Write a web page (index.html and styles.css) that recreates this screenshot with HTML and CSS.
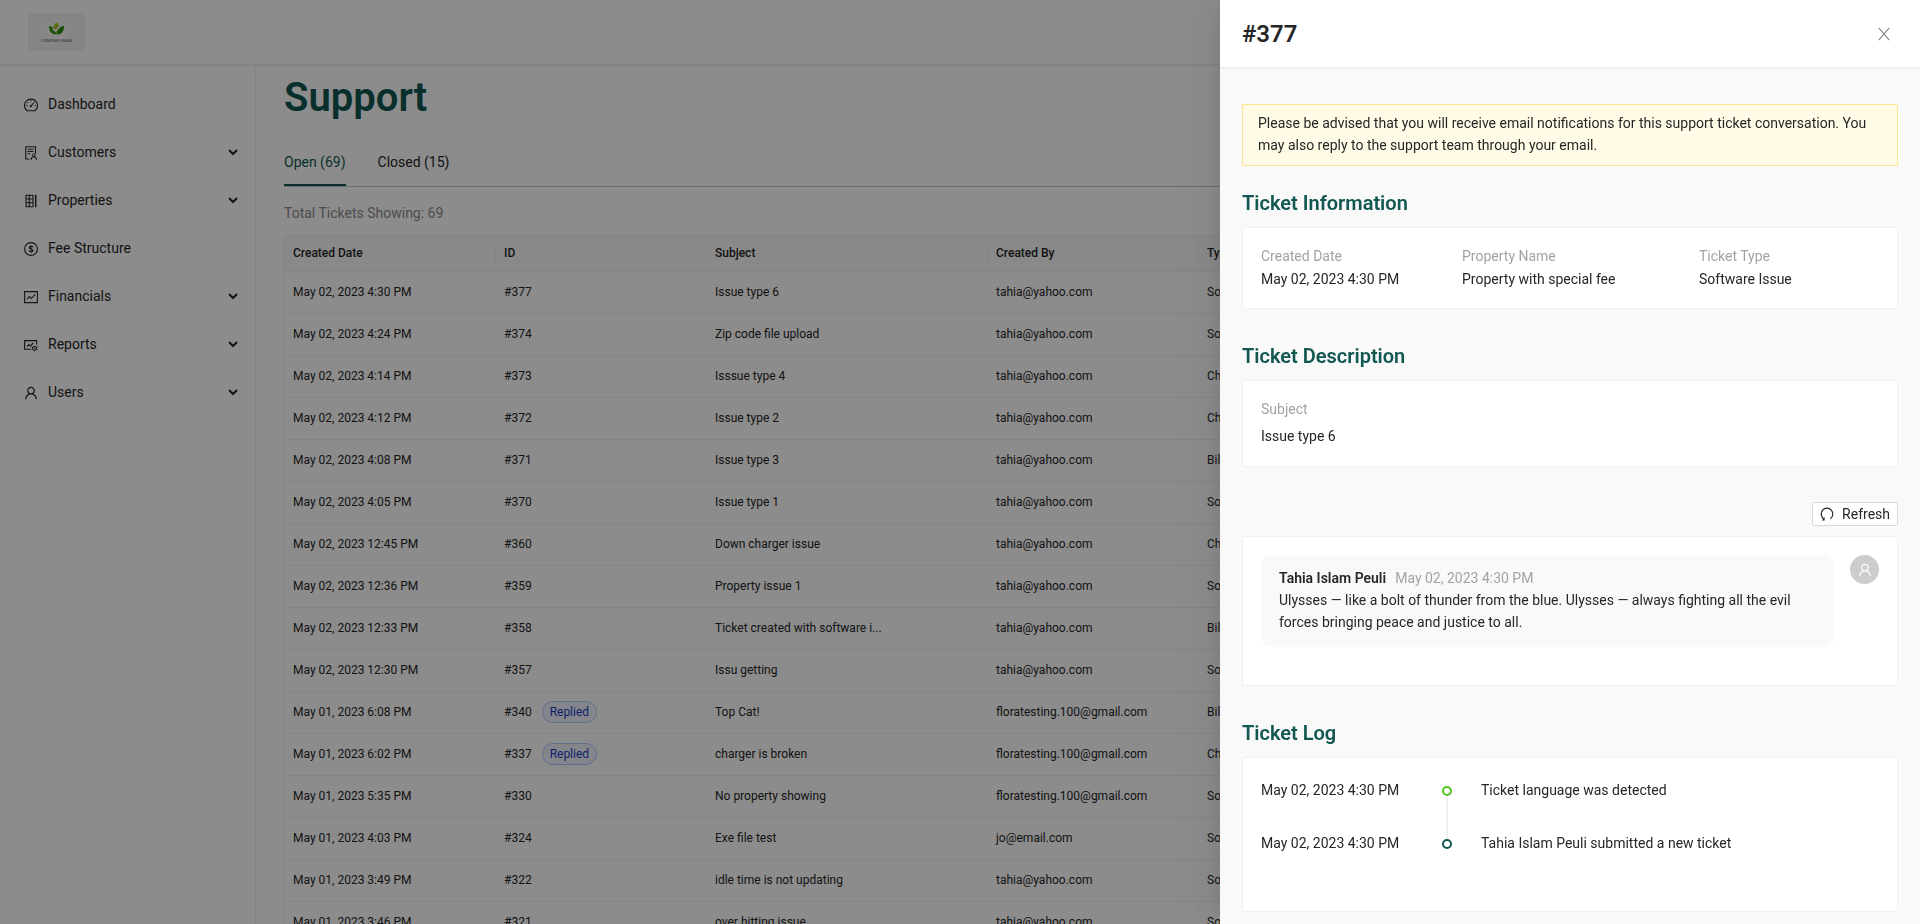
FILE: index.html
```html
<!DOCTYPE html>
<html lang="en">
<head>
<meta charset="utf-8">
<meta name="viewport" content="width=device-width, initial-scale=1">
<title>Support</title>
<link rel="stylesheet" href="styles.css">
</head>
<body>
<svg class="defs" aria-hidden="true">
  <symbol id="i-user" viewBox="64 64 896 896"><path fill="currentColor" d="M858.5 763.6a374 374 0 00-80.6-119.5 375.63 375.63 0 00-119.5-80.6c-.4-.2-.8-.3-1.2-.5C719.5 518 760 444.7 760 362c0-137-111-248-248-248S264 225 264 362c0 82.7 40.5 156 102.8 201.1-.4.2-.8.3-1.2.5-44.8 18.9-85 46-119.5 80.6a375.63 375.63 0 00-80.6 119.5A371.7 371.7 0 00136 901.8a8 8 0 008 8.2h60c4.4 0 7.9-3.5 8-7.8 2-77.2 33-149.5 87.8-204.3 56.7-56.7 132-87.9 212.2-87.9s155.5 31.2 212.2 87.9C779 752.7 810 825 812 902.2c.1 4.4 3.6 7.8 8 7.8h60a8 8 0 008-8.2c-1-47.8-10.9-94.3-29.5-138.2zM512 534c-45.9 0-89.1-17.9-121.6-50.4S340 407.9 340 362c0-45.9 17.9-89.1 50.4-121.6S466.1 190 512 190s89.1 17.9 121.6 50.4S684 316.1 684 362c0 45.9-17.9 89.1-50.4 121.6S557.9 534 512 534z"/></symbol>
  <symbol id="i-chevron" viewBox="0 0 10 10"><path fill="none" stroke="currentColor" stroke-width="2" d="M1 3l4 4 4-4"/></symbol>
</svg>

<div class="app">
  <header class="topbar">
    <a class="logo" href="#" aria-label="Company Name">
      <svg viewBox="0 0 57 38" width="57" height="38">
        <defs><radialGradient id="lg"><stop offset="0" stop-color="#fafafa"/><stop offset="1" stop-color="#f0f0f0"/></radialGradient></defs>
        <rect width="57" height="38" fill="url(#lg)"/>
        <path fill="#a9c31a" d="M28.500 9.500c2.500 1.500 3.500 4 3 7l-3 4-3-4c-.5-3 .5-5.500 3-7z"/>
        <path fill="#3f9a10" d="M21 13c3 0 6 2 7.500 8.500C23 21.500 21 18 21 13z"/>
        <path fill="#2b8a0a" d="M36 13c-3 0-6 2-7.500 8.500C34 21.500 36 18 36 13z"/>
        <path fill="none" stroke="#f4f4f4" stroke-width="1.800" d="M25 15.500l2.500 2.500 4.500-5"/>
        <text class="logo-text" x="29" y="29" text-anchor="middle">COMPANY NAME</text>
      </svg>
    </a>
  </header>

  <div class="shell">
    <nav class="sidebar" aria-label="Main">
      <a class="nav-item" href="#"><svg class="icon" viewBox="0 0 14 14"><path fill="none" stroke="currentColor" stroke-width="1.100" d="M3 12.700a6.500 6.500 0 1 1 8 0zM6.500 8.500L9.500 5.200M7 2.500v1M2.300 7.500h1.200M10.500 7.500h1.200M3.600 4.100l.8.8M9.800 4.600l.6-.6"/><circle cx="6.700" cy="8.200" r="1" fill="currentColor"/></svg><span>Dashboard</span></a>
      <a class="nav-item" href="#"><svg class="icon" viewBox="0 0 14 14"><path fill="none" stroke="currentColor" stroke-width="1.100" d="M5.500 13H1.700V.8h9.800v6.700M3.500 3.300h6M3.500 5.500h6M3.500 7.700h3"/><circle cx="9.800" cy="9.300" r="1.400" fill="none" stroke="currentColor"/><path fill="none" stroke="currentColor" stroke-width="1.100" d="M7.200 13.800c0-4 5.200-4 5.200 0"/></svg><span>Customers</span><svg class="chev"><use href="#i-chevron"/></svg></a>
      <a class="nav-item" href="#"><svg class="icon" viewBox="0 0 14 14"><path fill="none" stroke="currentColor" stroke-width="1.100" d="M2 1v12M5.300 1v12M9 1v12M1.500 1.300h8M1.500 5h8M1.500 8.800h8M1.500 12.700h8"/><path stroke="currentColor" stroke-width="1.500" d="M11.700.7v12.600"/></svg><span>Properties</span><svg class="chev"><use href="#i-chevron"/></svg></a>
      <a class="nav-item" href="#"><svg class="icon" viewBox="0 0 14 14"><circle cx="7" cy="7" r="6.400" fill="none" stroke="currentColor" stroke-width="1.100"/><path fill="none" stroke="currentColor" stroke-width="1.100" d="M9 5.300C8.700 3.900 5.200 3.900 5.200 5.600c0 1.800 3.800 1 3.800 2.900 0 1.800-3.700 1.700-4 0M7 3.300v7.400"/></svg><span>Fee Structure</span></a>
      <a class="nav-item" href="#"><svg class="icon" viewBox="0 0 14 14"><path fill="none" stroke="currentColor" stroke-width="1.100" d="M.6 1.600h12.800v11H.6zM2.800 9.500l2.500-3 2 2L11.200 4.300"/></svg><span>Financials</span><svg class="chev"><use href="#i-chevron"/></svg></a>
      <a class="nav-item" href="#"><svg class="icon" viewBox="0 0 14 14"><path fill="none" stroke="currentColor" stroke-width="1.100" d="M6.800 11.300H.6V2.600h12v4M3 8.500l1.800-1.800 1.500 1.300 3-3.200"/><circle cx="10.600" cy="10.300" r="2" fill="none" stroke="currentColor"/><circle cx="10.600" cy="10.300" r=".8" fill="currentColor"/><path stroke="currentColor" d="M7.600 8.700l1.300.7M12.300 11.200l1.300.7M13.600 8.700l-1.300.7M8.900 11.200l-1.300.7M10.600 12.300v1"/></svg><span>Reports</span><svg class="chev"><use href="#i-chevron"/></svg></a>
      <a class="nav-item" href="#"><svg class="icon"><use href="#i-user"/></svg><span>Users</span><svg class="chev"><use href="#i-chevron"/></svg></a>
    </nav>

    <main class="main">
      <h1 class="page-title">Support</h1>
      <div class="tabs" role="tablist">
        <button class="tab tab-active" role="tab" aria-selected="true">Open (69)</button>
        <button class="tab" role="tab" aria-selected="false">Closed (15)</button>
      </div>
      <p class="total">Total Tickets Showing: 69</p>
      <table class="tickets">
        <colgroup><col class="c-date"><col class="c-id"><col class="c-subject"><col class="c-by"><col></colgroup>
        <thead><tr><th>Created Date</th><th>ID</th><th>Subject</th><th>Created By</th><th>Type</th></tr></thead>
        <tbody>
          <tr><td>May 02, 2023 4:30 PM</td><td>#377</td><td>Issue type 6</td><td>tahia@yahoo.com</td><td>Software Issue</td></tr>
          <tr><td>May 02, 2023 4:24 PM</td><td>#374</td><td>Zip code file upload</td><td>tahia@yahoo.com</td><td>Software Issue</td></tr>
          <tr><td>May 02, 2023 4:14 PM</td><td>#373</td><td>Isssue type 4</td><td>tahia@yahoo.com</td><td>Charger Issue</td></tr>
          <tr><td>May 02, 2023 4:12 PM</td><td>#372</td><td>Issue type 2</td><td>tahia@yahoo.com</td><td>Charger Issue</td></tr>
          <tr><td>May 02, 2023 4:08 PM</td><td>#371</td><td>Issue type 3</td><td>tahia@yahoo.com</td><td>Billing Issue</td></tr>
          <tr><td>May 02, 2023 4:05 PM</td><td>#370</td><td>Issue type 1</td><td>tahia@yahoo.com</td><td>Software Issue</td></tr>
          <tr><td>May 02, 2023 12:45 PM</td><td>#360</td><td>Down charger issue</td><td>tahia@yahoo.com</td><td>Charger Issue</td></tr>
          <tr><td>May 02, 2023 12:36 PM</td><td>#359</td><td>Property issue 1</td><td>tahia@yahoo.com</td><td>Software Issue</td></tr>
          <tr><td>May 02, 2023 12:33 PM</td><td>#358</td><td>Ticket created with software i...</td><td>tahia@yahoo.com</td><td>Billing Issue</td></tr>
          <tr><td>May 02, 2023 12:30 PM</td><td>#357</td><td>Issu getting</td><td>tahia@yahoo.com</td><td>Software Issue</td></tr>
          <tr><td>May 01, 2023 6:08 PM</td><td>#340<span class="tag">Replied</span></td><td>Top Cat!</td><td>floratesting.100@gmail.com</td><td>Billing Issue</td></tr>
          <tr><td>May 01, 2023 6:02 PM</td><td>#337<span class="tag">Replied</span></td><td>charger is broken</td><td>floratesting.100@gmail.com</td><td>Charger Issue</td></tr>
          <tr><td>May 01, 2023 5:35 PM</td><td>#330</td><td>No property showing</td><td>floratesting.100@gmail.com</td><td>Software Issue</td></tr>
          <tr><td>May 01, 2023 4:03 PM</td><td>#324</td><td>Exe file test</td><td>jo@email.com</td><td>Software Issue</td></tr>
          <tr><td>May 01, 2023 3:49 PM</td><td>#322</td><td>idle time is not updating</td><td>tahia@yahoo.com</td><td>Software Issue</td></tr>
          <tr><td>May 01, 2023 3:46 PM</td><td>#321</td><td>over hitting issue</td><td>tahia@yahoo.com</td><td>Software Issue</td></tr>
        </tbody>
      </table>
    </main>
  </div>
</div>

<div class="mask"></div>

<aside class="drawer" role="dialog" aria-labelledby="drawer-title">
  <header class="drawer-head">
    <h2 class="drawer-title" id="drawer-title">#377</h2>
    <button class="close" aria-label="Close"><svg viewBox="0 0 14 14" width="14" height="14"><path fill="none" stroke="currentColor" stroke-width="1.200" d="M1.800.8l10.400 12.400M12.200.8L1.800 13.200"/></svg></button>
  </header>
  <div class="drawer-body">
    <div class="alert" role="alert">Please be advised that you will receive email notifications for this support ticket conversation. You may also reply to the support team through your email.</div>

    <section class="section">
      <h3 class="section-title">Ticket Information</h3>
      <dl class="card info">
        <div><dt>Created Date</dt><dd>May 02, 2023 4:30 PM</dd></div>
        <div><dt>Property Name</dt><dd>Property with special fee</dd></div>
        <div><dt>Ticket Type</dt><dd>Software Issue</dd></div>
      </dl>
    </section>

    <section class="section">
      <h3 class="section-title">Ticket Description</h3>
      <dl class="card subject"><dt>Subject</dt><dd>Issue type 6</dd></dl>
    </section>

    <div class="actions">
      <button class="refresh"><svg viewBox="0 0 14 14" width="14" height="14"><path fill="none" stroke="currentColor" stroke-width="1.200" d="M4 11.900A5.800 5.800 0 1 1 10.200 11.800"/><path fill="currentColor" d="M4.600 9.900v3.600H1.900z"/></svg>Refresh</button>
    </div>
    <div class="card chat">
      <div class="bubble">
        <p><strong class="author">Tahia Islam Peuli</strong><time class="when">May 02, 2023 4:30 PM</time></p>
        <p>Ulysses — like a bolt of thunder from the blue. Ulysses — always fighting all the evil forces bringing peace and justice to all.</p>
      </div>
      <span class="avatar"><svg width="14" height="14"><use href="#i-user"/></svg></span>
    </div>

    <section class="section">
      <h3 class="section-title">Ticket Log</h3>
      <ol class="card log">
        <li class="log-item"><time>May 02, 2023 4:30 PM</time><span class="rail"><i class="dot dot-green"></i><i class="line"></i></span><span>Ticket language was detected</span></li>
        <li class="log-item"><time>May 02, 2023 4:30 PM</time><span class="rail"><i class="dot"></i></span><span>Tahia Islam Peuli submitted a new ticket</span></li>
      </ol>
    </section>
  </div>
</aside>
</body>
</html>
```

FILE: styles.css
```css
:root {
  --brand: #115752;
  --text: #262626;
  --muted: #a3a3a3;
  --line: #f0f0f0;
}

* { box-sizing: border-box; }

body {
  margin: 0;
  font: 400 14px/22px Roboto, "Liberation Sans", sans-serif;
  color: var(--text);
  background: #fff;
}

h1, h2, h3, p, dl, dd, ol { margin: 0; padding: 0; }
ol { list-style: none; }
button { font: inherit; color: inherit; cursor: pointer; }
a { color: inherit; text-decoration: none; }
.defs { display: none; }

/* Page shell */
.app {
  display: flex;
  flex-direction: column;
  height: 100vh;
  overflow: hidden;
}

.topbar {
  flex: none;
  height: 66px;
  padding: 13px 28px;
  border-bottom: 2px solid var(--line);
}

.logo { display: block; width: 57px; height: 38px; }
.logo-text { font: 500 4px Roboto, sans-serif; fill: #777; }

.shell { display: flex; flex: 1; min-height: 0; }

.sidebar {
  flex: none;
  width: 256px;
  padding-top: 14px;
  border-right: 1px solid var(--line);
}

.nav-item {
  display: flex;
  align-items: center;
  gap: 10px;
  height: 48px;
  padding: 0 17px 0 24px;
}

.icon { width: 14px; height: 14px; flex: none; margin-top: 2px; }
.chev { width: 10px; height: 10px; margin-left: auto; }

.main { flex: 1; min-width: 0; padding: 8px 28px 0; overflow: hidden; }

.page-title {
  margin-bottom: 17px;
  font-size: 40px;
  line-height: 48px;
  font-weight: 600;
  color: var(--brand);
}

.tabs { display: flex; gap: 32px; border-bottom: 1px solid #c6c6c6; }

.tab {
  padding: 12px 0 11px;
  border: 0;
  border-bottom: 2px solid transparent;
  background: none;
}

.tab-active { color: var(--brand); border-color: var(--brand); }
.total { margin: 15px 0 11px; color: #8c8c8c; }

/* Ticket table */
.tickets {
  width: 100%;
  table-layout: fixed;
  border-collapse: separate;
  border-spacing: 0;
  border: 1px solid var(--line);
  font-size: 12px;
  line-height: 20px;
}

.c-date, .c-id, .c-by { width: 211px; }
.c-subject { width: 281px; }

.tickets th, .tickets td {
  height: 42px;
  padding: 0 8px 2px;
  border-bottom: 1px solid var(--line);
  text-align: left;
  white-space: nowrap;
}

.tickets th {
  height: 36px;
  font-weight: 500;
  background: linear-gradient(var(--line), var(--line)) right center / 1px 20px no-repeat #fafafa;
}

.tag {
  display: inline-block;
  margin-left: 10px;
  padding: 0 7px;
  border: 1px solid #adc6ff;
  border-radius: 11px;
  background: #f0f5ff;
  color: #1d39c4;
}

/* Overlay and drawer */
.mask { position: fixed; inset: 0; background: rgba(0, 0, 0, 0.45); }

.drawer {
  position: fixed;
  top: 0;
  right: 0;
  bottom: 0;
  display: flex;
  flex-direction: column;
  width: 700px;
  max-width: 100%;
  background: #f9f9f9;
  box-shadow: -6px 0 16px -8px rgba(0, 0, 0, 0.08), -9px 0 28px rgba(0, 0, 0, 0.05), -12px 0 48px 16px rgba(0, 0, 0, 0.03);
}

.drawer-head {
  display: flex;
  align-items: center;
  justify-content: space-between;
  height: 69px;
  flex: none;
  padding: 0 22px;
  border-bottom: 2px solid var(--line);
  background: #fff;
}

.drawer-title { font-size: 24px; line-height: 32px; font-weight: 600; }

.close {
  display: flex;
  padding: 7px;
  border: 0;
  background: none;
  color: #8c8c8c;
}

.drawer-body { flex: 1; min-height: 0; padding: 35px 22px 0; overflow: hidden; }

.alert {
  margin-bottom: 23px;
  padding: 7px 15px 9px;
  border: 1px solid #ffe58f;
  background: #fffbe6;
}

.section { margin-bottom: 33px; }

.section-title {
  margin-bottom: 10px;
  font-size: 20px;
  line-height: 28px;
  font-weight: 600;
  color: var(--brand);
}

.card {
  padding: 18px;
  border: 1px solid var(--line);
  border-radius: 2px;
  background: #fff;
}

dt { color: var(--muted); }

.info {
  display: grid;
  grid-template-columns: 201fr 237fr 180fr;
  padding: 17px 18px 18px;
}

.info > div { display: grid; gap: 1px; }

.subject { display: grid; gap: 5px; padding: 17px 18px 19px; }

.actions { display: flex; justify-content: flex-end; margin: 35px 0 10px; }

.refresh {
  display: flex;
  align-items: center;
  gap: 8px;
  height: 24px;
  padding: 0 7px;
  border: 1px solid #d9d9d9;
  border-radius: 2px;
  background: #fff;
}

.chat {
  display: flex;
  align-items: flex-start;
  gap: 16px;
  margin-bottom: 33px;
  padding-bottom: 38px;
}

.bubble {
  flex: 1;
  padding: 12px 18px 14px;
  border-radius: 10px;
  background: #f9f9f9;
}

.author { font-weight: 600; }
.when { margin-left: 9px; color: var(--muted); }

.avatar {
  display: flex;
  align-items: center;
  justify-content: center;
  width: 29px;
  height: 29px;
  border-radius: 50%;
  background: #ccc;
  color: #fff;
}

.log { padding: 21px 18px 26px; }

.log-item {
  display: grid;
  grid-template-columns: 181px 10px 1fr;
  height: 53px;
}

.log-item > span:last-child { padding-left: 29px; }

.rail {
  display: flex;
  flex-direction: column;
  align-items: center;
  padding-top: 7px;
  margin-bottom: -7px;
}

.dot {
  width: 10px;
  height: 10px;
  border: 2px solid var(--brand);
  border-radius: 50%;
}

.dot-green { border-color: #52c41a; }
.line { flex: 1; width: 2px; background: var(--line); }
```
